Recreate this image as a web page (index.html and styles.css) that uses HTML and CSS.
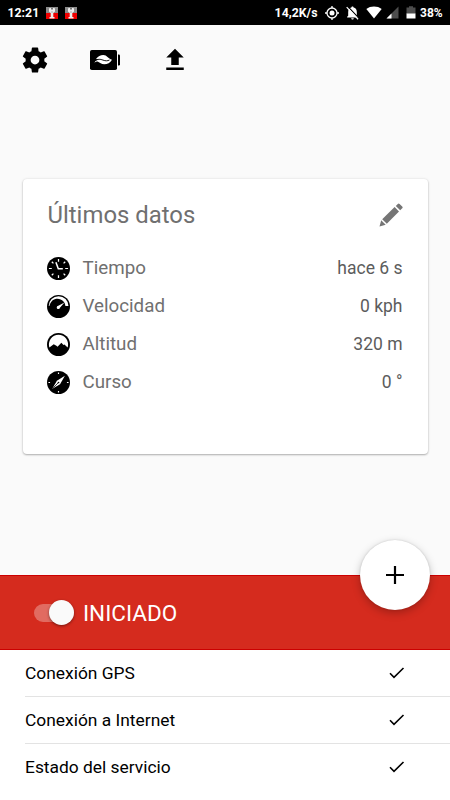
FILE: index.html
```html
<!DOCTYPE html>
<html lang="es">
<head>
    <meta charset="UTF-8">
    <meta name="viewport" content="width=device-width, initial-scale=1.0">
    <title>Últimos datos</title>
    <link rel="stylesheet" href="styles.css">
</head>
<body>
    <div class="status-bar">
        <span class="clock">12:21</span>
        <svg class="notification" viewBox="0 0 12 12">
            <rect width="12" height="12" fill="#f00000"/>
            <path d="M0 0h12v6H0z" fill="#8c8c8c"/>
            <path d="M3 2q0-1 1-1h4q1 0 1 1v2.500L7.300 6v4H8.500v1.500h-5V10h1.200V6L3 4.500z" fill="#eee"/>
            <path d="M5 1h2v1.500H5zM5.500 4.500h1v1h-1z" fill="#777"/>
        </svg>
        <svg class="notification" viewBox="0 0 12 12">
            <rect width="12" height="12" fill="#f00000"/>
            <path d="M0 0h12v6H0z" fill="#8c8c8c"/>
            <path d="M3 2q0-1 1-1h4q1 0 1 1v2.500L7.300 6v4H8.500v1.500h-5V10h1.200V6L3 4.500z" fill="#eee"/>
            <path d="M5 1h2v1.500H5zM5.500 4.500h1v1h-1z" fill="#777"/>
        </svg>
        <span class="speed">14,2K/s</span>
        <svg class="gps" viewBox="0 0 14 14">
            <circle cx="7" cy="7" r="5" fill="none" stroke="#fff" stroke-width="1.300"/>
            <circle cx="7" cy="7" r="2.500" fill="#fff"/>
            <path d="M7 0v2M7 12v2M0 7h2M12 7h2" stroke="#fff" stroke-width="1.300"/>
        </svg>
        <svg class="bell" viewBox="0 0 12 13">
            <path d="M6 0.500c.7 0 1 .4 1 1 2 .5 3 2 3 4V9l1 1v.7H1V10l1-1V5.500c0-2 1-3.500 3-4 0-.6.3-1 1-1zM4.800 11.300h2.400c0 .8-.5 1.200-1.200 1.200s-1.200-.4-1.200-1.200z" fill="#fff"/>
            <path d="M1.800 0.500l10 10.700" stroke="#000" stroke-width="1"/>
            <path d="M.6 1l10.600 11.300" stroke="#fff" stroke-width="1.100"/>
        </svg>
        <svg class="wifi" viewBox="0 0 16 13">
            <path d="M8 12.500L.3 2.900C2.500 1.200 5.100.4 8 .4s5.500.8 7.700 2.500z" fill="#fff"/>
        </svg>
        <svg class="signal" viewBox="0 0 13 13">
            <path d="M12.500 .5v12H.5z" fill="#4d4d4d"/>
            <path d="M5.500 7.500v5h-5z" fill="#fff"/>
        </svg>
        <svg class="battery" viewBox="0 0 10 13">
            <path d="M3 .3h4v1.200h2.500V8H.5V1.500H3z" fill="#4d4d4d"/>
            <path d="M.5 7.500h9v5h-9z" fill="#fff"/>
        </svg>
        <span class="percent">38%</span>
    </div>

    <div class="toolbar">
        <svg viewBox="0 0 24 24">
            <path d="M12 15.500A3.500 3.500 0 0 1 8.500 12 3.500 3.500 0 0 1 12 8.500a3.500 3.500 0 0 1 3.500 3.500 3.500 3.500 0 0 1-3.500 3.500m7.430-2.530c.04-.32.07-.64.07-.97s-.03-.66-.07-1l2.110-1.630c.19-.15.24-.42.12-.64l-2-3.460c-.12-.22-.39-.31-.61-.22l-2.490 1c-.52-.39-1.060-.73-1.690-.98l-.37-2.650A.506.506 0 0 0 14 2h-4c-.25 0-.46.18-.5.42l-.37 2.650c-.63.25-1.170.59-1.690.98l-2.490-1c-.22-.09-.49 0-.61.22l-2 3.460c-.13.22-.07.49.12.64L4.570 11c-.04.34-.07.67-.07 1s.03.65.07.97l-2.110 1.660c-.19.15-.25.42-.12.64l2 3.460c.12.22.39.3.61.22l2.490-1.010c.52.4 1.060.74 1.690.99l.37 2.650c.04.24.25.42.5.42h4c.25 0 .46-.18.5-.42l.37-2.650c.63-.26 1.170-.59 1.690-.99l2.490 1.010c.22.08.49 0 .61-.22l2-3.460c.12-.22.07-.49-.12-.64z"/>
        </svg>
        <svg class="eco" viewBox="0 0 30 30">
            <rect x="0" y="5" width="27" height="20" rx="1.800"/>
            <path d="M28 9.500h.8q1.200 0 1.200 1.200v8.600q0 1.200-1.200 1.200H28z"/>
            <path d="M6 14c2-2.700 4.500-4 7.300-4 3.700 0 4.700 3.800 8.700 4.700-1.800 3-4.500 4.600-7.700 4.600-3.300 0-4.300-1.800-6.300-2.600-1.200-.4-2.200-.1-3.500 1 .5-2 2.500-3.200 4.700-3z" fill="#fff"/>
            <path d="M4.500 16c3.500-2.400 6-1.800 8.500-.9s4.500 1 6.500-.1" fill="none" stroke="#000" stroke-width=".9"/>
        </svg>
        <svg viewBox="0 0 24 24">
            <path d="M9 16h6v-6h4l-7-7-7 7h4zM5 18h14v2H5z"/>
        </svg>
    </div>

    <div class="card">
        <div class="card-header">
            <h1>Últimos datos</h1>
            <svg class="edit" viewBox="0 0 24 24">
                <path d="M.5 23.500l1.700-6.200 4.500 4.500zM3.200 16.200L15.600 4l4.400 4.400L7.800 20.800zM16.800 2.900l2-2q.9-.9 1.800 0l2.600 2.600q.9.900 0 1.800l-2 2z"/>
            </svg>
        </div>
        <div class="data-row">
            <svg viewBox="0 0 24 24">
                <circle cx="12" cy="12" r="12"/>
                <path d="M12 2v3M12 19v3M2 12h3M19 12h3M5 5l1.700 1.700M17.300 17.300L19 19M5 19l1.700-1.700M17.300 6.700L19 5" stroke="#fff" stroke-width="1.300"/>
                <path d="M9.300 5.500L11.800 12.200H16.500" fill="none" stroke="#fff" stroke-width="1.600"/>
            </svg>
            <span class="name">Tiempo</span>
            <span class="value">hace 6 s</span>
        </div>
        <div class="data-row">
            <svg viewBox="0 0 24 24">
                <circle cx="12" cy="12" r="12"/>
                <path d="M1.800 11.500a10.200 10.200 0 0 1 20.600 0h-3.200c-.2-1.800-.8-3.300-2-4.700C12.500 1.500 4 3.500 2.500 11.500z" fill="#fff"/>
                <path d="M18.200 7.700l-4.700 5.600a1.700 1.700 0 1 1-1.700-2z" fill="#fff"/>
            </svg>
            <span class="name">Velocidad</span>
            <span class="value">0 kph</span>
        </div>
        <div class="data-row">
            <svg viewBox="0 0 24 24">
                <circle cx="12" cy="12" r="12"/>
                <path d="M2.500 15A10 10 0 1 1 21.500 15L18.200 12l-1 .6L15 10.300l-4 4-1.200-1L7 11.800z" fill="#fff"/>
            </svg>
            <span class="name">Altitud</span>
            <span class="value">320 m</span>
        </div>
        <div class="data-row">
            <svg viewBox="0 0 24 24">
                <circle cx="12" cy="12" r="12"/>
                <path d="M12 1.500v1.700M12 20.800v1.700M1.500 12h1.700M20.800 12h1.700" stroke="#fff" stroke-width="1.200"/>
                <path d="M18.700 5L13.600 13.700 5.600 18.400 10.300 10.200z" fill="#fff"/>
                <path d="M6.500 17.600L11.500 12.500" stroke="#000" stroke-width=".8"/>
                <circle cx="12" cy="12" r=".9"/>
            </svg>
            <span class="name">Curso</span>
            <span class="value">0 °</span>
        </div>
    </div>

    <div class="service">
        <div class="switch"><div class="thumb"></div></div>
        <span>INICIADO</span>
        <div class="fab">
            <svg viewBox="0 0 18 18">
                <path d="M9 0v18M0 9h18" stroke="#000" stroke-width="2.200"/>
            </svg>
        </div>
    </div>

    <ul class="checks">
        <li>
            <span>Conexión GPS</span>
            <svg viewBox="0 0 16 12"><path d="M1 6.300l4 4L14.500 1"/></svg>
        </li>
        <li>
            <span>Conexión a Internet</span>
            <svg viewBox="0 0 16 12"><path d="M1 6.300l4 4L14.500 1"/></svg>
        </li>
        <li>
            <span>Estado del servicio</span>
            <svg viewBox="0 0 16 12"><path d="M1 6.300l4 4L14.500 1"/></svg>
        </li>
    </ul>
</body>
</html>
```
FILE: styles.css
```css
* {
    box-sizing: border-box;
}
body {
    font-family: Roboto, sans-serif;
    background-color: #fafafa;
    color: #000;
    margin: 0;
    height: 800px;
    overflow: hidden;
    display: flex;
    flex-direction: column;
}
svg {
    display: block;
    flex: none;
}

/* status bar */
.status-bar {
    height: 25px;
    flex: none;
    background-color: #000;
    color: #fff;
    font-size: 12.3px;
    font-weight: 700;
    display: flex;
    align-items: center;
    padding: 0 8px 0 7.5px;
}
.clock {
    width: 38.5px;
}
.notification {
    width: 12px;
    height: 12px;
    margin-right: 7px;
}
.speed {
    margin-left: auto;
}
.gps {
    width: 14px;
    height: 14px;
    margin-left: 7px;
}
.bell {
    width: 13px;
    height: 14px;
    margin-left: 7px;
}
.wifi {
    width: 16px;
    height: 13px;
    margin-left: 7px;
}
.signal {
    width: 13px;
    height: 13px;
    margin-left: 4px;
}
.battery {
    width: 10px;
    height: 13px;
    margin-left: 7.5px;
}
.percent {
    width: 22px;
    margin-left: 4px;
    font-size: 12px;
}

/* toolbar */
.toolbar {
    height: 70px;
    flex: none;
    display: flex;
    align-items: center;
    gap: 40px;
    padding: 0 20px;
}
.toolbar svg {
    width: 30px;
    height: 30px;
}

/* card */
.card {
    height: 275px;
    flex: none;
    margin: 84px 22.5px 0;
    padding: 17px 25px 0;
    background-color: #fff;
    border-radius: 4px;
    box-shadow: 0 1px 2px rgba(0, 0, 0, 0.28), 0 0 3px rgba(0, 0, 0, 0.1);
    color: #707070;
}
.card-header {
    height: 38px;
    display: flex;
    align-items: center;
    justify-content: space-between;
    margin-bottom: 15px;
}
.card-header h1 {
    font-size: 23.9px;
    font-weight: 400;
    margin: 0;
}
.edit {
    width: 24px;
    height: 24px;
    fill: #757575;
}
.data-row {
    height: 38px;
    display: flex;
    align-items: center;
    font-size: 18.75px;
}
.data-row svg {
    width: 23px;
    height: 23px;
    margin: 0 12.5px 0 -0.5px;
}
.value {
    margin-left: auto;
    color: #5c5c5c;
    font-size: 17.5px;
}

/* service bar */
.service {
    position: relative;
    height: 75px;
    flex: none;
    margin-top: auto;
    background-color: #d52b1e;
    border-top: 1px solid #c00;
    border-bottom: 1px solid #c00;
    color: #fff;
    font-size: 22.5px;
    display: flex;
    align-items: center;
    padding-left: 34px;
}
.switch {
    width: 40px;
    height: 18px;
    border-radius: 9px;
    background-color: rgba(255, 255, 255, 0.3);
    margin-right: 9px;
    display: flex;
    align-items: center;
    justify-content: flex-end;
}
.thumb {
    width: 25px;
    height: 25px;
    flex: none;
    border-radius: 50%;
    background-color: #fafafa;
    box-shadow: 0 1px 3px rgba(0, 0, 0, 0.45);
}
.fab {
    position: absolute;
    top: -36px;
    right: 20px;
    width: 70px;
    height: 70px;
    border-radius: 50%;
    background-color: #fff;
    box-shadow: 0 3px 8px rgba(0, 0, 0, 0.25), 0 0 2px rgba(0, 0, 0, 0.15);
    display: flex;
    align-items: center;
    justify-content: center;
}
.fab svg {
    width: 18px;
    height: 18px;
}

/* checks */
.checks {
    height: 150px;
    flex: none;
    margin: 0;
    padding: 0 0 0 25px;
    list-style: none;
    background-color: #fff;
}
.checks li {
    height: 46.8px;
    display: flex;
    align-items: center;
    justify-content: space-between;
    padding-right: 45px;
    border-bottom: 1px solid #e3e3e3;
    font-size: 17.4px;
}
.checks li:last-child {
    border-bottom: none;
}
.checks span {
    padding-top: 1px;
}
.checks svg {
    width: 16px;
    height: 12px;
    fill: none;
    stroke: #000;
    stroke-width: 1.6;
}
```
